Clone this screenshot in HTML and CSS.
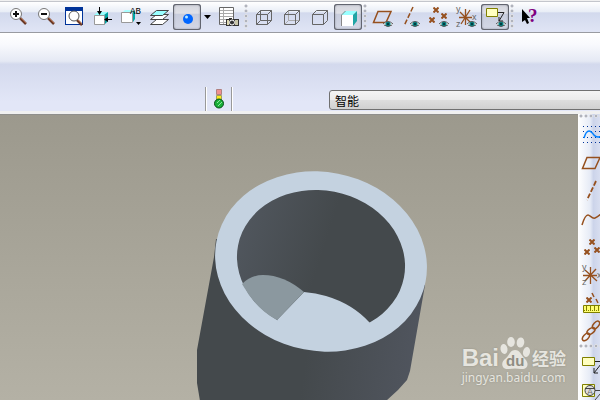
FILE: index.html
```html
<!DOCTYPE html>
<html lang="zh">
<head>
<meta charset="utf-8">
<title>智能</title>
<link rel="stylesheet" href="styles.css">
</head>
<body>
<svg class="defs" aria-hidden="true">
  <defs>
    <symbol id="eye" viewBox="0 0 10 6"><path d="M0 3Q5 -2 10 3Q5 8 0 3Z" fill="#fff"/><circle cx="5" cy="3" r="2.600" fill="#008080"/><path d="M4 2h2v2h-2z" fill="#003c40"/><path d="M0 3Q5 -2 10 3M1 4Q5 7 9 4" fill="none" stroke="#555"/></symbol>
    <symbol id="cross" viewBox="0 0 6 6"><path d="M.5 .5L5.500 5.500M5.500 .5L.5 5.500" stroke="#96501e" stroke-width="2"/></symbol>
  </defs>
</svg>

<header class="toolbar">
  <button class="tool" aria-label="Zoom in"><svg viewBox="0 0 28 26"><path d="M15 14l6 6" stroke="#6a3a28" stroke-width="2.500"/><path d="M16 14l5 5" stroke="#b06a48"/><circle cx="11" cy="10" r="5.500" fill="#fff" stroke="#777"/><path d="M8 10h6M11 7v6" stroke="#111" stroke-width="2"/></svg></button>
  <button class="tool" aria-label="Zoom out"><svg viewBox="0 0 28 26"><path d="M15 14l6 6" stroke="#6a3a28" stroke-width="2.500"/><path d="M16 14l5 5" stroke="#b06a48"/><circle cx="11" cy="10" r="5.500" fill="#fff" stroke="#777"/><path d="M8 10h6" stroke="#111" stroke-width="2"/></svg></button>
  <button class="tool" aria-label="Refit"><svg viewBox="0 0 28 26"><path d="M4 3h18v18H4z" fill="#003399"/><path d="M5 7h16v13H5z" fill="#fff"/><path d="M16 16l5 5" stroke="#6a3a28" stroke-width="2.500"/><path d="M17 16l4 4" stroke="#b06a48"/><circle cx="13" cy="12" r="5" fill="#fff" stroke="#555"/></svg></button>
  <button class="tool" aria-label="Reorient view"><svg viewBox="0 0 28 26"><path d="M5 11l4-3h10l-4 3z" fill="#9ff"/><path d="M15 11l4-3v9l-4 4z" fill="#00a0a0"/><path d="M5.500 11.500h10v9h-10z" fill="#fff" stroke="#999"/><path d="M10.500 3v6M16 15.500h7" stroke="#000"/><path d="M8 7h5l-2.500 4zM19 13v5l-4-2.500z"/></svg></button>
  <button class="tool" aria-label="Saved views"><svg viewBox="0 0 28 26"><path d="M5 9l3-3h8v3z" fill="#aff"/><path d="M16 8l2-2v9l-2 3z" fill="#0aa"/><path d="M4.500 8.500h11v10h-11z" fill="#fff" stroke="#999"/><text x="13" y="10" class="label-ab">AB</text><path d="M19 18h5l-2.500 3z"/></svg></button>
  <button class="tool" aria-label="Layers"><svg viewBox="0 0 28 26"><g stroke="#444"><path d="M5.500 20.500l6-5h12l-6 5z" fill="#fff"/><path d="M5.500 15.500l6-5h12l-6 5z" fill="#fff"/><path d="M5.500 11.500l6-5h12l-6 5z" fill="#9ff"/></g></svg></button>
  <button class="tool pressed" aria-label="Spin center"><svg viewBox="0 0 28 26"><circle cx="15" cy="15" r="5" fill="#0066ff"/><circle cx="13.500" cy="13" r="1.500" fill="#b8e8ff"/></svg></button>
  <button class="tool drop" aria-label="More views"><svg viewBox="0 0 14 26"><path d="M3 11h7l-3.500 4z"/></svg></button>
  <button class="tool" aria-label="View manager"><svg viewBox="0 0 28 26"><path d="M4.500 3.500h14v17h-14z" fill="#fff" stroke="#666"/><path d="M5 6.500h13M5 9.500h13M5 12.500h13M5 15.500h13M5 18.500h13M8.500 4v16" stroke="#aaa"/><path d="M11 15h3v-1h3v1h7v7H11z" fill="#333"/><path d="M12 16h2v5h-2z" fill="#ddd8b0"/><path d="M20 16h3v5h-3z" fill="#c8c5a8"/><circle cx="17" cy="18.500" r="2.500" fill="#333" stroke="#fff"/></svg></button>
  <span class="grip"></span>
  <button class="tool" aria-label="Wireframe"><svg viewBox="0 0 28 26"><path d="M6.500 10.500h11v10h-11zM10.500 6.500h11v10h-11zM6.500 10.500l4-4M17.500 10.500l4-4M17.500 20.500l4-4M6.500 20.500l4-4" fill="none" stroke="#666"/></svg></button>
  <button class="tool" aria-label="Hidden line"><svg viewBox="0 0 28 26"><path d="M10.500 6.500v10h11M10.500 16.500l-4 4" fill="none" stroke="#aaa"/><path d="M6.500 10.500h11v10h-11zM6.500 10.500l4-4h11v10l-4 4M17.500 10.500l4-4" fill="none" stroke="#666"/></svg></button>
  <button class="tool" aria-label="No hidden"><svg viewBox="0 0 28 26"><path d="M6.500 10.500h11v10h-11zM6.500 10.500l4-4h11v10l-4 4M17.500 10.500l4-4" fill="none" stroke="#666"/></svg></button>
  <button class="tool pressed" aria-label="Shading"><svg viewBox="0 0 28 26"><path d="M7 11l4-4h12l-4 4z" fill="#9ff"/><path d="M19 11l4-4v10l-4 5z" fill="#20a5a5"/><path d="M7 11h12v11H7z" fill="#fff"/><path d="M7.500 22v-11l4-4" fill="none" stroke="#888"/></svg></button>
  <span class="grip"></span>
  <button class="tool" aria-label="Plane display"><svg viewBox="0 0 28 26"><path d="M9 7.500h13l-5 11H4.500z" fill="none" stroke="#96501e" stroke-width="1.500"/><use href="#eye" x="14" y="17" width="10" height="6"/></svg></button>
  <button class="tool" aria-label="Axis display"><svg viewBox="0 0 28 26"><path d="M16 3L7 22" stroke="#96501e" stroke-width="1.500" stroke-dasharray="5 2"/><use href="#eye" x="13" y="17" width="10" height="6"/></svg></button>
  <button class="tool" aria-label="Point display"><svg viewBox="0 0 28 26"><use href="#cross" x="8" y="3" width="6" height="6"/><use href="#cross" x="16" y="9" width="6" height="6"/><use href="#cross" x="4" y="13" width="6" height="6"/><use href="#eye" x="14" y="17" width="10" height="6"/></svg></button>
  <button class="tool" aria-label="Coordinate system display"><svg viewBox="0 0 28 26"><path d="M12.500 5v16M6 13.500h13M7 8l11 11M17 6L8 20" stroke="#96501e" stroke-width="1.300"/><text x="3" y="8" class="label-axis">y</text><text x="19" y="16" class="label-axis">x</text><text x="3" y="23" class="label-axis">z</text><use href="#eye" x="14" y="17" width="10" height="6"/></svg></button>
  <button class="tool pressed" aria-label="Annotation display"><svg viewBox="0 0 28 26"><path d="M5.500 4.500h11v8h-11z" fill="#ffffc0" stroke="#808000"/><path d="M17 8.500h6L18 17M18 13v4h4" fill="none" stroke="#222"/><use href="#eye" x="15" y="17" width="10" height="6"/></svg></button>
  <span class="grip"></span>
  <button class="tool" aria-label="Context help"><svg viewBox="0 0 28 26"><path d="M6 5v13l3-2 2 4 2-1-2-5h3z" fill="#000"/><text x="12" y="18" class="label-help">?</text></svg></button>
</header>

<section class="dashboard">
  <div class="status"><svg viewBox="0 0 12 22" role="img" aria-label="Ready"><path d="M3.500 1.500h5v5h-5z" fill="#f09090" stroke="#b08080"/><path d="M3.500 7.500h5v4h-5z" fill="#ffee20" stroke="#a0a060"/><circle cx="6" cy="15.500" r="4.500" fill="#18b038" stroke="#064d16"/><path d="M4 15l3-3M5 18l4-4" stroke="#8de59a"/></svg></div>
  <select class="filter" aria-label="选择过滤器"><option>智能</option></select>
</section>

<main class="workspace">
  <div class="viewport">
    <svg class="model" viewBox="0 0 578 285" preserveAspectRatio="xMidYMid slice" role="img" aria-label="Cylinder">
      <defs>
        <linearGradient id="body" gradientUnits="userSpaceOnUse" x1="305" y1="245" x2="415" y2="260"><stop offset="0" stop-color="#44494c"/><stop offset="1" stop-color="#50555e"/></linearGradient>
        <linearGradient id="bore" gradientUnits="userSpaceOnUse" x1="238" y1="120" x2="322" y2="130"><stop offset="0" stop-color="#50565d"/><stop offset="1" stop-color="#44494c"/></linearGradient>
      </defs>
      <path d="M216 124L214 142L197 235V268L200 286H386L398 275L407 265L410 256L425 170Z" fill="url(#body)"/>
      <ellipse cx="321" cy="146.500" rx="106.500" ry="89.500" transform="rotate(11 321 146.500)" fill="#c4d2e0"/>
      <ellipse cx="321" cy="146.500" rx="84.500" ry="71" transform="rotate(11 321 146.500)" fill="url(#bore)"/>
      <path d="M304 177Q316 178 326 181Q353 189 370 208L350 225H300L277 205Z" fill="#c4d2e0"/>
      <path d="M242 169Q251 160 263 160Q284 160 304 177L277 205Q256 194 242 169Z" fill="#8b989f"/>
    </svg>
    <div class="watermark">
      <div class="brand"><span class="latin">Bai</span><span class="paw"><svg viewBox="0 0 32 34" aria-hidden="true"><g fill="currentColor"><ellipse cx="5" cy="13" rx="3.500" ry="5" transform="rotate(-8 5 13)"/><ellipse cx="12" cy="6" rx="3.800" ry="5"/><ellipse cx="21.500" cy="6.500" rx="3.800" ry="5" transform="rotate(8 21.500 6.500)"/><ellipse cx="27.500" cy="16" rx="3.500" ry="5" transform="rotate(12 27.500 16)"/><path d="M16 14C21 14 22 19 26 23C31 28 28 34 22 33Q16 32 10 33C3 34 1 27 6 23C10 20 11 14 16 14Z"/></g></svg><span class="du">du</span></span><span class="cjk">经验</span></div>
      <div class="address">jingyan.baidu.com</div>
    </div>
  </div>
  <aside class="sidebar">
    <span class="grip-row"></span>
    <button class="tool side" aria-label="Sketch"><svg viewBox="0 0 28 28"><path d="M5 6.500h23M5 11.500h23M5 17.500h23M5 22.500h23" stroke="#003399" stroke-dasharray="1 3"/><path d="M6 18Q8 11 11 11Q13 11 16 15Q20 20 27 13" fill="none" stroke="#0080ff" stroke-width="1.500"/></svg></button>
    <button class="tool side" aria-label="Plane"><svg viewBox="0 0 28 28"><path d="M9 9.500h13l-5 11H4.500z" fill="none" stroke="#96501e" stroke-width="1.500"/></svg></button>
    <button class="tool side" aria-label="Axis"><svg viewBox="0 0 28 28"><path d="M18 5L9 24" stroke="#96501e" stroke-width="1.800" stroke-dasharray="5 2"/></svg></button>
    <button class="tool side" aria-label="Curve"><svg viewBox="0 0 28 28"><path d="M4 21Q7 11 10 11C12 11 14 15 17 14Q20 13 24 9" fill="none" stroke="#96501e" stroke-width="1.500"/></svg></button>
    <button class="tool side" aria-label="Points"><svg viewBox="0 0 28 28"><use href="#cross" x="11" y="7" width="6" height="6"/><use href="#cross" x="6" y="17" width="6" height="6"/><use href="#cross" x="16" y="15" width="6" height="6"/></svg></button>
    <button class="tool side" aria-label="Coordinate system"><svg viewBox="0 0 28 28"><path d="M12.500 7v17M5 15.500h14M7 10l12 11M18 9L7 21" stroke="#96501e" stroke-width="1.300"/><text x="4" y="10" class="label-axis">y</text><text x="19" y="18" class="label-axis">x</text><text x="4" y="25" class="label-axis">z</text></svg></button>
    <button class="tool side" aria-label="Measure"><svg viewBox="0 0 28 28"><use href="#cross" x="8" y="9" width="6" height="6"/><path d="M14 5l2 4M18 11l2 4" stroke="#96501e" stroke-width="1.500"/><path d="M5.500 17.500h20v7h-20z" fill="#ffff70" stroke="#808000"/><path d="M6 22.500h20" stroke="#808000" stroke-dasharray="1 1"/><path d="M8.500 18v4M12.500 18v4M16.500 18v4M20.500 18v4" stroke="#808000"/></svg></button>
    <button class="tool side" aria-label="Link"><svg viewBox="0 0 28 28"><g fill="none" stroke="#96501e" stroke-width="1.500"><ellipse cx="8" cy="21" rx="4.500" ry="2.500" transform="rotate(-48 8 21)"/><ellipse cx="13" cy="15" rx="4.500" ry="2.500" transform="rotate(-35 13 15)"/><ellipse cx="18" cy="9" rx="4.500" ry="2.500" transform="rotate(-48 18 9)"/></g></svg></button>
    <span class="grip-row"></span>
    <button class="tool side" aria-label="Note"><svg viewBox="0 0 28 28"><path d="M4.500 7.500h12v8h-12z" fill="#ffffc0" stroke="#808000"/><path d="M17 11.500h8L16 23M16 18v5h4" fill="none" stroke="#222"/></svg></button>
    <button class="tool side" aria-label="Annotation"><svg viewBox="0 0 28 28"><path d="M4.500 6.500h12v12h-12z" fill="#ffffc0" stroke="#808000"/><circle cx="12" cy="12.500" r="5" fill="#ddd" stroke="#444"/><path d="M7 10.500h10M17 12.500h8L17 22" fill="none" stroke="#444"/><text x="9" y="17" class="label-axis">A</text></svg></button>
  </aside>
</main>
</body>
</html>
```
FILE: styles.css
```css
* { box-sizing: border-box; }

body {
  margin: 0;
  height: 100vh;
  display: flex;
  flex-direction: column;
  overflow: hidden;
  background: #f0f0f0;
  font-family: "Liberation Sans", "Noto Sans CJK SC", sans-serif;
}

.defs { position: absolute; width: 0; height: 0; }

.toolbar {
  display: flex;
  flex: none;
  align-items: center;
  margin-top: 1px;
  padding: 2px 0 2px 5px;
  border-top: 1px solid #c4c6cc;
  border-bottom: 1px solid #999ba1;
  background: linear-gradient(#ffffff, #e8edf6 33%, #d2d9ed 36%, #e0e5f5);
}

.tool {
  flex: none;
  width: 28px;
  height: 26px;
  padding: 0;
  border: 0;
  background: none;
}

.tool svg { display: block; width: 100%; height: 100%; }

.drop { width: 14px; }

.side { height: 28px; }

.pressed {
  border-radius: 3px;
  background: linear-gradient(#d4d6de, #dfe0e6 35%, #c8cddd 40%, #d4d8e6);
  box-shadow: inset 0 0 0 1px #62656f, inset 0 0 2px 1px #8f929c;
}

.grip {
  flex: none;
  width: 7px;
  height: 26px;
  background: radial-gradient(circle at 2px 2px, #b0b3bd 1px, #ffffff 2px, transparent 2px) 1px 0 / 7px 5px;
}

.grip-row {
  flex: none;
  height: 6px;
  background: radial-gradient(circle at 2px 2px, #b0b3bd 1px, #ffffff 2px, transparent 2px) 1px 0 / 5px 6px;
}

.label-ab { font: 9px "Liberation Mono", monospace; fill: #000; }
.label-axis { font: 9px "Liberation Sans", sans-serif; fill: #666; }
.label-help { font: bold 19px "Liberation Serif", serif; fill: #800080; }

.dashboard {
  display: flex;
  flex: none;
  align-items: flex-end;
  height: 78px;
  background: linear-gradient(#ffffff, #f8f9fd 15%, #e5e9f4 36%, #d3d9ed 40%, #e2e6f7 88%);
}

.status {
  display: flex;
  align-items: center;
  justify-content: center;
  width: 28px;
  height: 24px;
  margin-left: 205px;
  border-left: 1px solid #999;
  border-right: 1px solid #fff;
  box-shadow: inset 1px 0 #fff, inset -1px 0 #999;
}

.status svg { width: 12px; height: 22px; }

.filter {
  flex: 1;
  height: 20px;
  margin: 0 -20px 1px 96px;
  padding: 0 5px;
  appearance: none;
  border: 1px solid #707070;
  border-radius: 3px;
  background: linear-gradient(#f4f4f4, #ebebeb 48%, #dddddd 52%, #d0d0d0);
  color: #000;
  font: 12px "Noto Sans CJK SC", sans-serif;
}

.workspace {
  display: flex;
  flex: 1;
  min-height: 0;
  margin-top: 3px;
}

.viewport {
  position: relative;
  flex: 1;
  min-width: 0;
  border-top: 1px solid #8f8f8c;
  background: linear-gradient(#9c998d, #b4b1a5);
}

.model { display: block; width: 100%; height: 100%; }

.sidebar {
  display: flex;
  flex: none;
  flex-direction: column;
  width: 22px;
  overflow: hidden;
  background: linear-gradient(90deg, #ffffff, #e6ebf6 55%, #ccd4ea 70%, #d8def0);
}

.watermark {
  position: absolute;
  right: 12px;
  bottom: 14px;
  color: #e6e5df;
  text-shadow: 0 0 2px #8e8c83;
}

.brand {
  display: flex;
  align-items: flex-end;
  height: 34px;
}

.latin { font: bold 24px/24px "Liberation Sans", sans-serif; }

.paw { position: relative; width: 32px; height: 34px; }
.paw svg { display: block; width: 32px; height: 34px; }
.du {
  position: absolute;
  left: 7px;
  bottom: 1px;
  color: #8f8d83;
  text-shadow: none;
  font: bold 15px/16px "Liberation Sans", sans-serif;
}

.cjk { margin-left: 1px; font: bold 17px/24px "Noto Sans CJK SC", sans-serif; }

.address { font: 12px/16px "Noto Sans", sans-serif; }
```
